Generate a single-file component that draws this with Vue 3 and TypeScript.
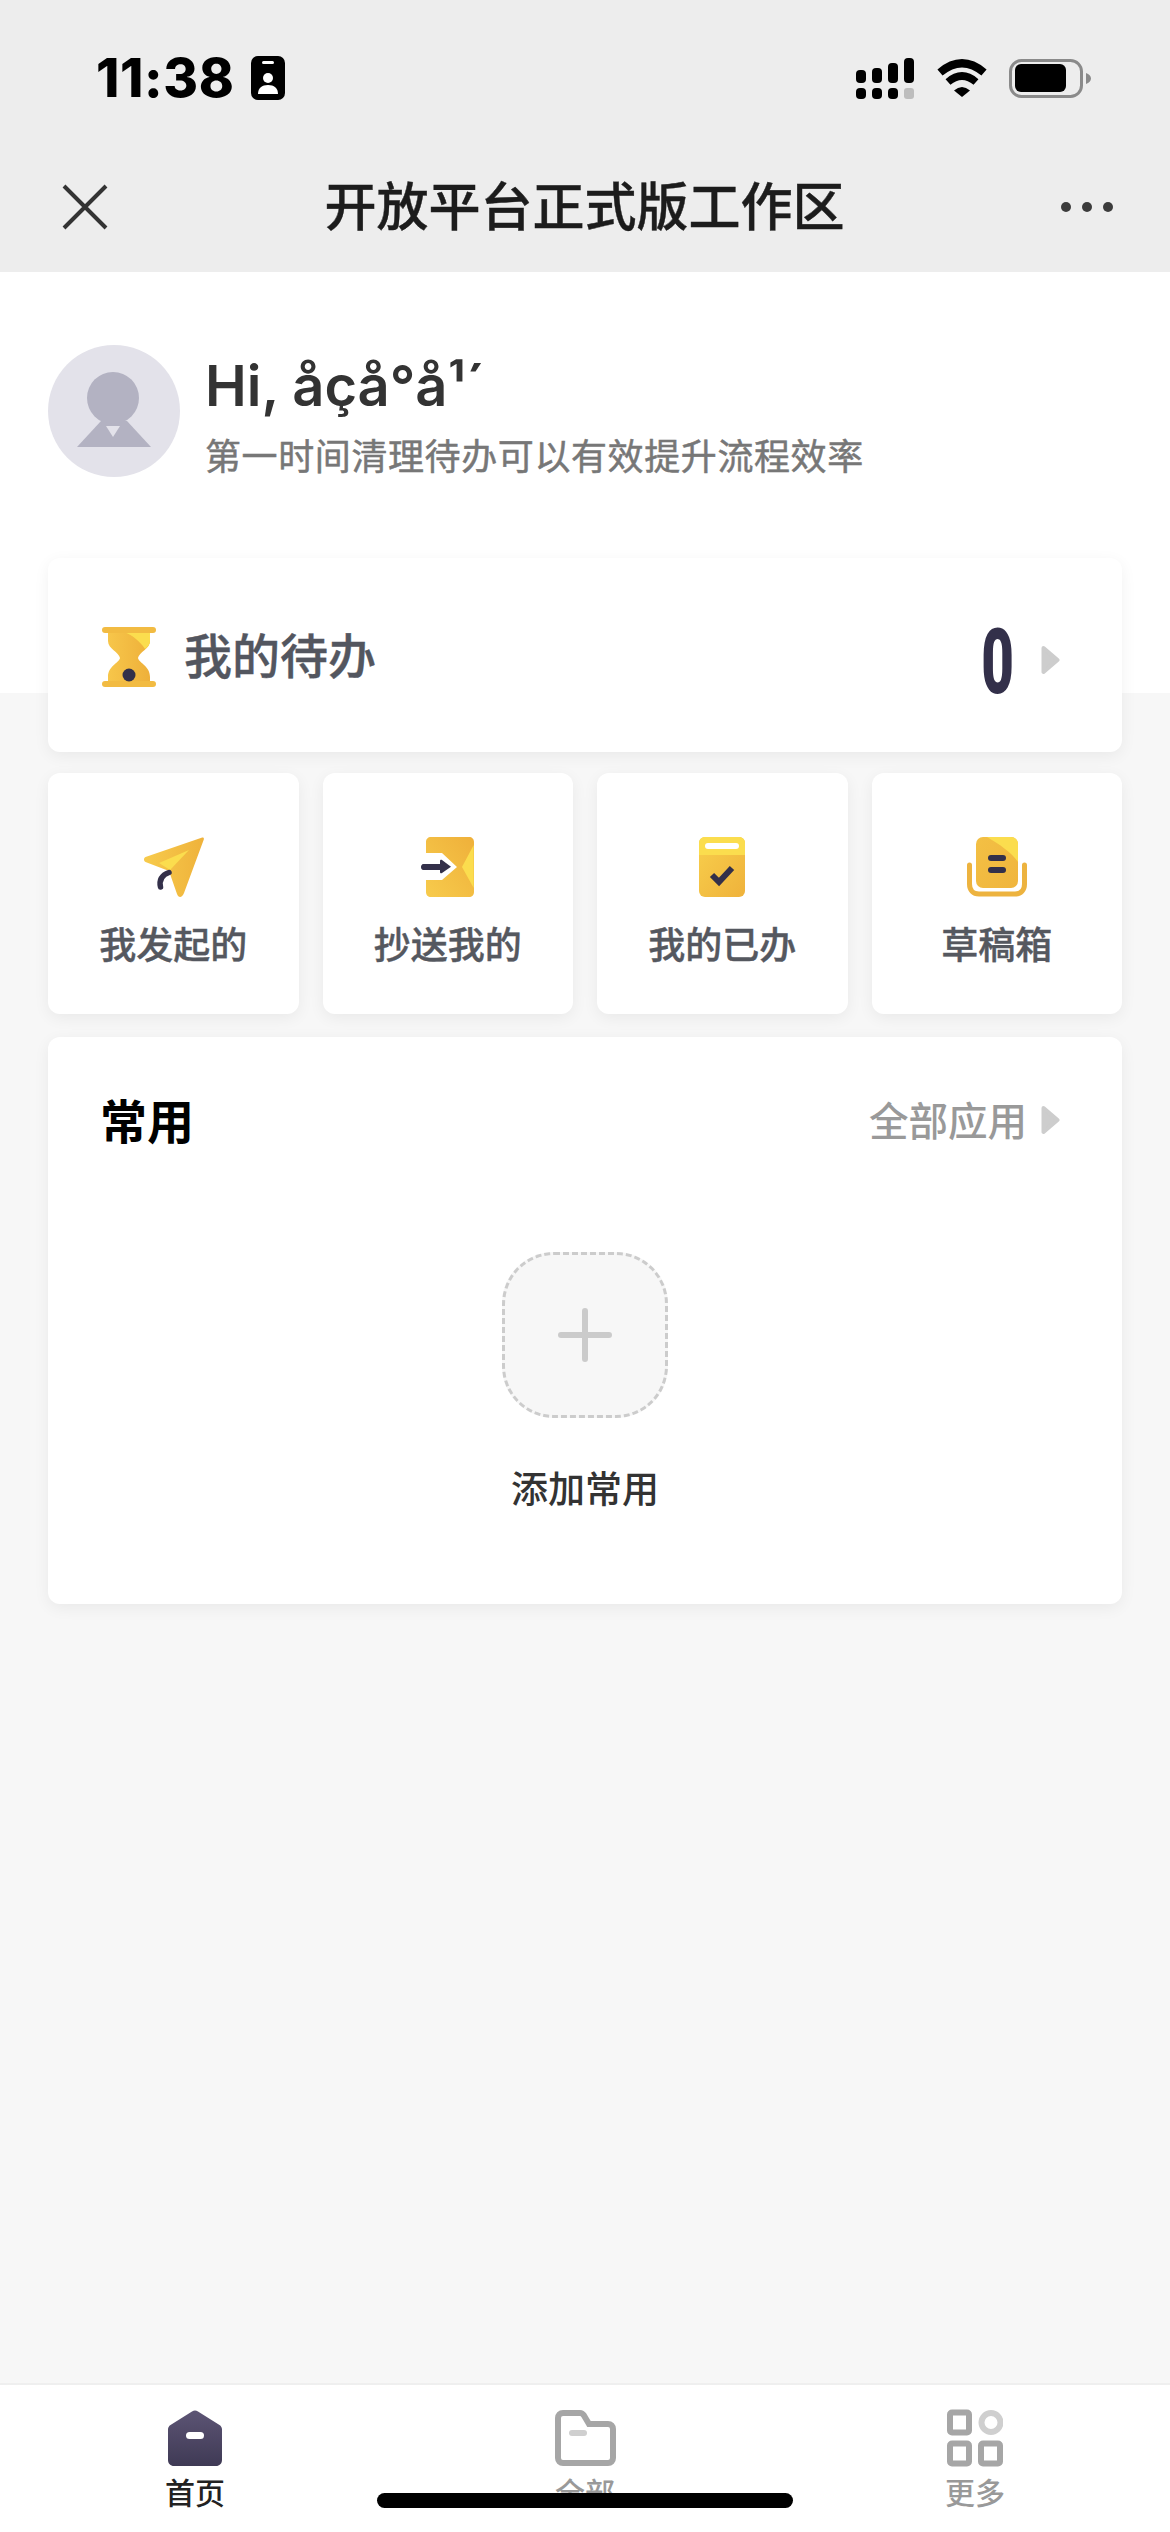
<script setup lang="ts">
const signalTop = [
  { x: 0, y: 12, h: 13 },
  { x: 16, y: 10, h: 15 },
  { x: 32, y: 5, h: 20 },
  { x: 48, y: 0, h: 25 },
]
const tiles = [
  { key: 'sent', label: '我发起的' },
  { key: 'cc', label: '抄送我的' },
  { key: 'done', label: '我的已办' },
  { key: 'draft', label: '草稿箱' },
]
const tabs = [
  { key: 'home', label: '首页', active: true },
  { key: 'all', label: '全部', active: false },
  { key: 'more', label: '更多', active: false },
]
</script>

<template>
  <div class="page">
    <header class="top">
      <div class="status">
        <span class="time">11:38</span>
        <svg class="badge" width="34" height="44" viewBox="0 0 34 44">
          <rect width="34" height="44" rx="7" fill="#000" />
          <rect x="11" y="5" width="12" height="3" rx="1.5" fill="#fff" />
          <circle cx="17" cy="22" r="5" fill="#fff" />
          <path d="M7 38c0-6 4-9 10-9s10 3 10 9z" fill="#fff" />
        </svg>
        <span class="spacer"></span>
        <svg class="signal" width="58" height="41" viewBox="0 0 58 41">
          <rect v-for="b in signalTop" :key="b.x" :x="b.x" :y="b.y" width="10" :height="b.h" rx="4" fill="#000" />
          <rect x="0" y="30" width="10" height="11" rx="4" fill="#000" />
          <rect x="16" y="30" width="10" height="11" rx="4" fill="#000" />
          <rect x="32" y="30" width="10" height="11" rx="4" fill="#000" />
          <rect x="48" y="30" width="10" height="11" rx="3" fill="#bdbdbd" />
        </svg>
        <svg class="wifi" width="50" height="38" viewBox="0 0 50 38">
          <path d="M3 13.5Q25 -5 47 13.5" fill="none" stroke="#000" stroke-width="8" />
          <path d="M11 23Q25 11 39 23" fill="none" stroke="#000" stroke-width="7.5" />
          <path d="M17 31.5Q25 24.5 33 31.5L25 38z" fill="#000" />
        </svg>
        <svg class="battery" width="82" height="39" viewBox="0 0 82 39">
          <rect x="1.5" y="1.5" width="71" height="36" rx="11" fill="none" stroke="#8a8a8a" stroke-width="3" />
          <rect x="6" y="5" width="51" height="28" rx="6" fill="#000" />
          <path d="M77 14c3 1 5 3 5 5.5s-2 4.5-5 5.5z" fill="#8a8a8a" />
        </svg>
      </div>
      <nav class="nav">
        <svg class="close" width="46" height="46" viewBox="0 0 46 46">
          <path d="M2 2L44 44M44 2L2 44" stroke="#333" stroke-width="4" fill="none" />
        </svg>
        <h1 class="title">开放平台正式版工作区</h1>
        <div class="dots"><i></i><i></i><i></i></div>
      </nav>
    </header>

    <main class="body">
      <section class="greet">
        <svg class="avatar" width="132" height="132" viewBox="0 0 132 132">
          <circle cx="66" cy="66" r="66" fill="#e3e2ea" />
          <path d="M29 102L53 76H79L103 102z" fill="#b3b2c2" />
          <circle cx="65" cy="53" r="26" fill="#b3b2c2" />
          <path d="M58 81L72 81L65 92z" fill="#e3e2ea" />
        </svg>
        <div class="greet-text">
          <div class="hi">Hi, åçå°å¹´</div>
          <div class="sub">第一时间清理待办可以有效提升流程效率</div>
        </div>
      </section>

      <section class="card todo">
        <svg class="todo-icon" width="54" height="60" viewBox="0 0 54 60">
          <defs>
            <linearGradient id="hg" x1="0" y1="0" x2="1" y2="0">
              <stop offset="0" stop-color="#f7c64a" />
              <stop offset="1" stop-color="#eeb03a" />
            </linearGradient>
          </defs>
          <path d="M6 3H48V14C48 22 37 25 36 31C37 36 48 39 48 50V57H6V50C6 39 17 36 18 31C17 25 6 22 6 14z" fill="url(#hg)" />
          <path d="M22 5H48V14C48 17 46 20 43 22C38 14 30 8 22 5z" fill="#fbdd4e" />
          <rect width="54" height="6" rx="3" fill="#f2bb42" />
          <rect y="54" width="54" height="6" rx="3" fill="#f2bb42" />
          <circle cx="27" cy="48" r="6.5" fill="#33304a" />
        </svg>
        <span class="todo-label">我的待办</span>
        <span class="spacer"></span>
        <span class="count">0</span>
        <svg class="arrow" width="19" height="30" viewBox="0 0 19 30">
          <path d="M2.5 3L16.5 15L2.5 27z" fill="#cdcdcd" stroke="#cdcdcd" stroke-width="4" stroke-linejoin="round" />
        </svg>
      </section>

      <section class="tiles">
        <div v-for="t in tiles" :key="t.key" class="card tile">
          <svg v-if="t.key === 'sent'" class="tile-icon" width="61" height="60" viewBox="0 0 61 60">
            <defs>
              <linearGradient id="sg" x1="0" y1="0" x2="1" y2="0">
                <stop offset="0" stop-color="#f7cb4c" />
                <stop offset="1" stop-color="#efb23b" />
              </linearGradient>
            </defs>
            <path d="M58.5 .8C60 0 61.3 1 60.8 2.5L41 56C39 61 35.5 61 34 57L26 34L2.5 25C.5 24 .5 21 2.5 20z" fill="url(#sg)" />
            <path d="M46 13L16 26L27 33z" fill="#fbdd4e" />
            <path d="M17.5 50C16 43 19 38 26 35.5" fill="none" stroke="#33304a" stroke-width="5.5" stroke-linecap="round" />
          </svg>
          <svg v-else-if="t.key === 'cc'" class="tile-icon" width="53" height="60" viewBox="0 0 53 60">
            <defs>
              <linearGradient id="ccg" x1="0" y1="1" x2="1" y2="0">
                <stop offset="0" stop-color="#f7cb4c" />
                <stop offset="1" stop-color="#efb03a" />
              </linearGradient>
            </defs>
            <path d="M5 5C5 2 7 0 10 0H48C51 0 53 2 53 5V55C53 58 51 60 48 60H10C7 60 5 58 5 55V43H21L36 30L21 16H5z" fill="url(#ccg)" />
            <path d="M52.7 8L41 30L52.7 51z" fill="#fbdd4e" />
            <path d="M2.5 27H19V24C19 23 20 22.5 21 23L30 29.7L21 36C20 36.8 19 36 19 35V33H2.5C.5 33 0 31 0 30C0 29 .5 27 2.5 27z" fill="#33304a" />
          </svg>
          <svg v-else-if="t.key === 'done'" class="tile-icon" width="46" height="60" viewBox="0 0 46 60">
            <defs>
              <linearGradient id="dng" x1="0" y1="0" x2="1" y2="1">
                <stop offset="0" stop-color="#f8cf4c" />
                <stop offset="1" stop-color="#efb23b" />
              </linearGradient>
            </defs>
            <rect width="46" height="60" rx="6" fill="url(#dng)" />
            <path d="M6 0H40C43.5 0 46 2.5 46 6V18H0V6C0 2.5 2.5 0 6 0z" fill="#fbdd4e" />
            <rect x="6" y="6" width="34" height="6" rx="3" fill="#fff" />
            <path d="M13 38L20 45L33 31" fill="none" stroke="#33304a" stroke-width="6" />
          </svg>
          <svg v-else class="tile-icon" width="60" height="60" viewBox="0 0 60 60">
            <defs>
              <linearGradient id="drg" x1="0" y1="0" x2="1" y2="1">
                <stop offset="0" stop-color="#f3c044" />
                <stop offset="1" stop-color="#f0b53d" />
              </linearGradient>
            </defs>
            <rect x="9" y="0" width="42" height="51" rx="7" fill="url(#drg)" />
            <path d="M20 0H44C48 0 51 3 51 7V25C44 15 32 7 20 0z" fill="#fbdd4e" />
            <rect x="21" y="18" width="18" height="6" rx="3" fill="#33304a" />
            <rect x="21" y="30" width="18" height="6" rx="3" fill="#33304a" />
            <path d="M2.5 28V47C2.5 53 6 57 12 57H48C54 57 57.5 53 57.5 47V28" fill="none" stroke="#edb33f" stroke-width="5" stroke-linecap="round" />
          </svg>
          <span class="tile-label">{{ t.label }}</span>
        </div>
      </section>

      <section class="card common">
        <div class="common-head">
          <span class="common-title">常用</span>
          <span class="spacer"></span>
          <span class="common-all">全部应用</span>
          <svg class="arrow" width="19" height="30" viewBox="0 0 19 30">
            <path d="M2.5 3L16.5 15L2.5 27z" fill="#cdcdcd" stroke="#cdcdcd" stroke-width="4" stroke-linejoin="round" />
          </svg>
        </div>
        <div class="add-box">
          <i class="plus-h"></i>
          <i class="plus-v"></i>
        </div>
        <div class="add-label">添加常用</div>
      </section>
    </main>

    <footer class="tabbar">
      <div v-for="tab in tabs" :key="tab.key" class="tab" :class="{ active: tab.active }">
        <svg v-if="tab.key === 'home'" width="54" height="60" viewBox="0 0 54 60">
          <defs>
            <linearGradient id="hmg" x1="0" y1="0" x2="0" y2="1">
              <stop offset="0" stop-color="#5c5474" />
              <stop offset="1" stop-color="#3f3a55" />
            </linearGradient>
          </defs>
          <path d="M24 3.5C26 2 28 2 30 3.5L51.5 17C53 18 54 19.5 54 21.5V52C54 55.5 51.5 58 48 58H6C2.5 58 0 55.5 0 52V21.5C0 19.5 1 18 2.5 17z" fill="url(#hmg)" />
          <rect x="18" y="24" width="18" height="7" rx="3.5" fill="#fff" />
        </svg>
        <svg v-else-if="tab.key === 'all'" width="61" height="60" viewBox="0 0 61 60">
          <path d="M3 10C3 7 5 5 8 5H25C27 5 28 6 29 7.5L34 16H53C56 16 58 18 58 21V50C58 53 56 55 53 55H8C5 55 3 53 3 50z" fill="none" stroke="#a6a6a6" stroke-width="6" />
          <rect x="14" y="22" width="18" height="6" rx="3" fill="#cfcfcf" />
        </svg>
        <svg v-else width="56" height="60" viewBox="0 0 56 60">
          <rect x="3" y="4.5" width="19" height="20" rx="2" fill="none" stroke="#a6a6a6" stroke-width="6" />
          <circle cx="44" cy="14.5" r="9.5" fill="none" stroke="#cfcfcf" stroke-width="6" />
          <rect x="3" y="35.5" width="19" height="20" rx="2" fill="none" stroke="#a6a6a6" stroke-width="6" />
          <rect x="34" y="35.5" width="19" height="20" rx="2" fill="none" stroke="#a6a6a6" stroke-width="6" />
        </svg>
        <span class="tab-label">{{ tab.label }}</span>
      </div>
      <div class="home-bar"></div>
    </footer>
  </div>
</template>

<style scoped>
.page {
  position: relative;
  width: 1170px;
  height: 2532px;
  overflow: hidden;
  display: flex;
  flex-direction: column;
  background: #f7f7f7;
  font-family: "Noto Sans CJK SC", "Noto Sans", sans-serif;
}
.spacer {
  flex: 1;
}
.top {
  background: #ededed;
}
.status {
  height: 128px;
  padding: 14px 79px 0 96px;
  display: flex;
  align-items: center;
}
.time {
  font-family: Inter, "Liberation Sans", sans-serif;
  font-size: 53px;
  font-weight: 800;
  color: #000;
  letter-spacing: 0.6px;
}
.badge {
  margin-left: 17px;
}
.wifi {
  margin-left: 23px;
}
.battery {
  margin-left: 22px;
}
.nav {
  height: 130px;
  padding: 0 57px 0 62px;
  display: flex;
  align-items: center;
  justify-content: space-between;
}
.title {
  margin: 0 0 6px;
  font-size: 52px;
  font-weight: 500;
  color: #1c1c1c;
  line-height: 60px;
  -webkit-text-stroke: 0.4px #1c1c1c;
}
.dots {
  display: flex;
  gap: 11px;
}
.dots i {
  width: 10px;
  height: 10px;
  border-radius: 50%;
  background: #3c3c3c;
}
.body {
  flex: 1;
  padding: 73px 48px 0;
  background: linear-gradient(#fff 421px, #f7f7f7 421px);
}
.greet {
  height: 132px;
  display: flex;
  align-items: center;
  gap: 25px;
  margin-bottom: 81px;
}
.greet-text {
  padding-top: 8px;
}
.hi {
  font-family: Inter, "Liberation Sans", sans-serif;
  font-size: 56px;
  font-weight: 600;
  color: #333;
  line-height: 70px;
}
.sub {
  font-size: 36px;
  letter-spacing: 0.6px;
  color: #777;
  line-height: 50px;
  margin-top: 8px;
  -webkit-text-stroke: 0.5px #777;
}
.card {
  background: #fff;
  border-radius: 12px;
  box-shadow: 0 4px 16px rgba(0, 0, 0, 0.06);
}
.todo {
  height: 194px;
  padding: 0 62px 0 54px;
  display: flex;
  align-items: center;
}
.todo-icon {
  margin-top: 4px;
}
.todo-label {
  margin: -4px 0 0 28px;
  font-size: 48px;
  font-weight: 500;
  color: #53565f;
  line-height: 60px;
  -webkit-text-stroke: 0.4px #53565f;
}
.count {
  font-family: Roboto, sans-serif;
  font-size: 91px;
  font-weight: 900;
  color: #33304a;
  line-height: 90px;
  width: 31px;
  display: flex;
  justify-content: center;
  margin-top: 14px;
  transform: scaleX(0.62);
}
.arrow {
  display: block;
  flex: none;
  margin-left: 28px;
}
.todo .arrow {
  margin-top: 10px;
}
.tiles {
  display: grid;
  grid-template-columns: repeat(4, 1fr);
  gap: 24px;
  margin-top: 21px;
}
.tile {
  height: 241px;
  padding-top: 64px;
  box-sizing: border-box;
  display: flex;
  flex-direction: column;
  align-items: center;
}
.tile-icon {
  display: block;
}
.tile-label {
  margin-top: 21px;
  font-size: 37px;
  font-weight: 500;
  color: #55585f;
  line-height: 50px;
  -webkit-text-stroke: 0.4px #55585f;
}
.common {
  height: 567px;
  margin-top: 23px;
  padding-top: 56px;
  box-sizing: border-box;
  display: flex;
  flex-direction: column;
  align-items: center;
}
.common-head {
  width: 100%;
  padding: 0 62px 0 52px;
  box-sizing: border-box;
  display: flex;
  align-items: center;
  height: 50px;
}
.common-title {
  font-size: 47px;
  font-weight: 700;
  color: #000;
}
.common-all {
  font-size: 39.5px;
  color: #999;
  font-weight: 500;
}
.common .arrow {
  margin: 4px 0 0 14px;
}
.add-box {
  position: relative;
  margin-top: 109px;
  width: 166px;
  height: 166px;
  box-sizing: border-box;
  border: 3px dashed #cccccc;
  border-radius: 52px;
  background: #f7f7f7;
}
.plus-h,
.plus-v {
  position: absolute;
  left: 50%;
  top: 50%;
  background: #cbcbcb;
  border-radius: 3px;
  transform: translate(-50%, -50%);
}
.plus-h {
  width: 54px;
  height: 6px;
}
.plus-v {
  width: 6px;
  height: 54px;
}
.add-label {
  margin-top: 44px;
  font-size: 37px;
  font-weight: 500;
  color: #333;
  line-height: 50px;
}
.tabbar {
  position: relative;
  height: 149px;
  box-sizing: border-box;
  border-top: 2px solid #efefef;
  background: #fff;
  display: grid;
  grid-template-columns: repeat(3, 1fr);
}
.tab {
  padding-top: 23px;
  display: flex;
  flex-direction: column;
  align-items: center;
}
.tab svg {
  display: block;
}
.tab-label {
  margin-top: 1px;
  font-size: 30px;
  line-height: 44px;
  font-weight: 500;
  color: #999;
}
.tab.active .tab-label {
  color: #222;
}
.home-bar {
  position: absolute;
  left: 377px;
  top: 108px;
  width: 416px;
  height: 15px;
  border-radius: 8px;
  background: #000;
}
</style>
